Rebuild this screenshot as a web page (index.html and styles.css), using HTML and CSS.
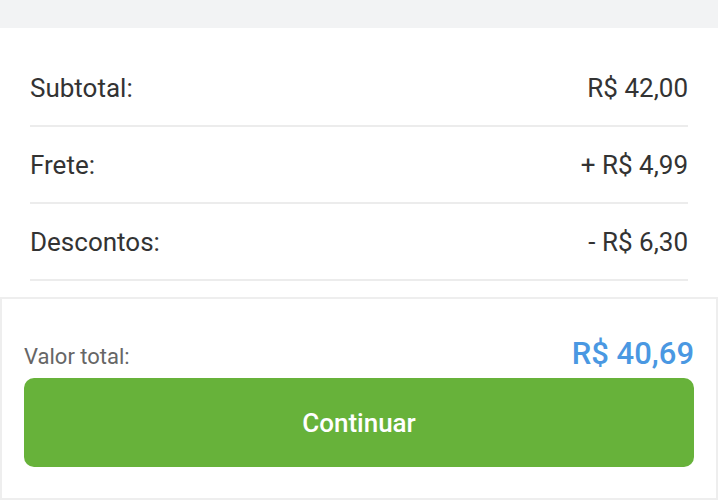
FILE: index.html
```html
<!DOCTYPE html>
<html lang="pt-BR">
<head>
    <meta charset="UTF-8">
    <meta name="viewport" content="width=device-width, initial-scale=1.0">
    <title>Resumo do pedido</title>
    <link rel="stylesheet" href="styles.css">
</head>
<body>
    <div class="top-bar"></div>

    <!-- Order summary -->
    <div class="summary">
        <div class="row">
            <span>Subtotal:</span>
            <span>R$ 42,00</span>
        </div>
        <div class="row">
            <span>Frete:</span>
            <span>+ R$ 4,99</span>
        </div>
        <div class="row">
            <span>Descontos:</span>
            <span>- R$ 6,30</span>
        </div>
    </div>

    <!-- Total and checkout button -->
    <div class="checkout">
        <div class="total">
            <span class="total-label">Valor total:</span>
            <span class="total-value">R$ 40,69</span>
        </div>
        <a href="#" class="button">Continuar</a>
    </div>
</body>
</html>
```

FILE: styles.css
```css
body {
    margin: 0;
    background-color: #fff;
    font-family: Roboto, "Noto Sans", sans-serif;
    color: #333;
}
.top-bar {
    height: 28px;
    background-color: #f2f3f4;
}
.summary {
    padding: 22px 30px 16px;
}
.row {
    display: flex;
    justify-content: space-between;
    align-items: center;
    height: 75px;
    border-bottom: 2px solid #ececec;
    font-size: 26px;
}
.checkout {
    border: 2px solid #eeeeee;
    padding: 36px 22px 30px;
    height: 203px;
    box-sizing: border-box;
}
.total {
    display: flex;
    justify-content: space-between;
    align-items: baseline;
    height: 36px;
    margin-bottom: 7px;
}
.total-label {
    font-size: 22px;
    color: #666;
}
.total-value {
    font-size: 31px;
    font-weight: 500;
    color: #4a98e2;
}
.button {
    display: flex;
    justify-content: center;
    align-items: center;
    height: 89px;
    border-radius: 10px;
    background-color: #67b23a;
    color: #fff;
    font-size: 26px;
    font-weight: 500;
    text-decoration: none;
}
```
